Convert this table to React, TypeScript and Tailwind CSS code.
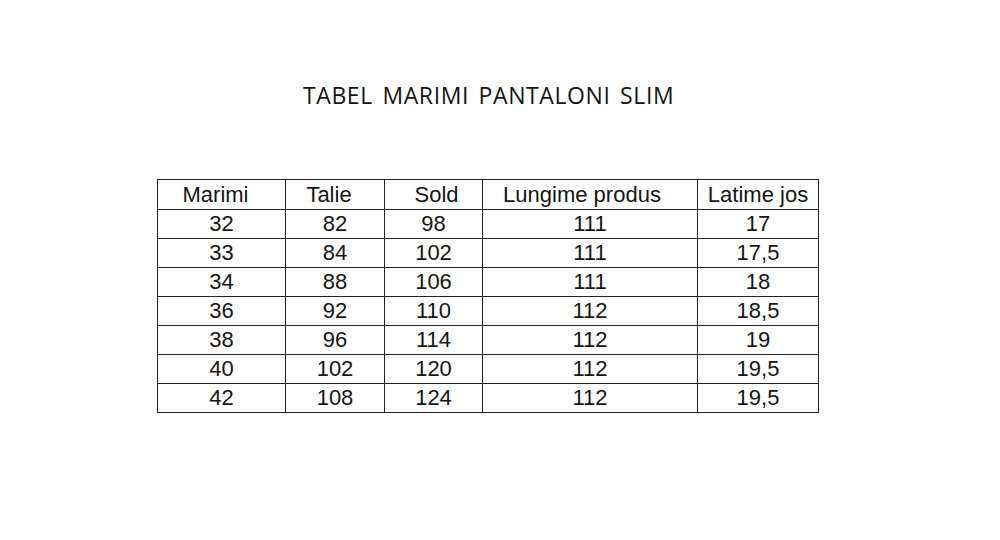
import React from "react";

const rows: string[][] = [
  ["32", "82", "98", "111", "17"],
  ["33", "84", "102", "111", "17,5"],
  ["34", "88", "106", "111", "18"],
  ["36", "92", "110", "112", "18,5"],
  ["38", "96", "114", "112", "19"],
  ["40", "102", "120", "112", "19,5"],
  ["42", "108", "124", "112", "19,5"],
];

const headers: { label: string; cls: string }[] = [
  { label: "Marimi", cls: "pr-[12px]" },
  { label: "Talie", cls: "pr-[12px]" },
  { label: "Sold", cls: "pl-[6px]" },
  { label: "Lungime produs", cls: "pr-[16px]" },
  { label: "Latime jos", cls: "" },
];

export default function App() {
  return (
    <div className="w-[1000px] h-[540px] bg-white text-[#151515]">
      <div className="pt-[80px] pl-[303px]">
        <h1 className="text-[23px] leading-[30px] font-normal font-['Open_Sans',sans-serif] tracking-[0.6px] [word-spacing:3px]">
          TABEL MARIMI PANTALONI SLIM
        </h1>
      </div>
      <div className="pt-[69px] pl-[157px]">
        <table className="table-fixed border-collapse font-['Liberation_Sans',Arial,sans-serif] text-[22px]">
          <colgroup>
            <col className="w-[128px]" />
            <col className="w-[99px]" />
            <col className="w-[98px]" />
            <col className="w-[215px]" />
            <col className="w-[121px]" />
          </colgroup>
          <thead>
            <tr className="h-[30px]">
              {headers.map((h) => (
                <th
                  key={h.label}
                  className={`border border-[#222] font-normal text-center p-0 leading-[24px] align-middle whitespace-nowrap ${h.cls}`}
                >
                  {h.label}
                </th>
              ))}
            </tr>
          </thead>
          <tbody>
            {rows.map((r, i) => (
              <tr key={i} className="h-[29px]">
                {r.map((c, j) => (
                  <td key={j} className="border border-[#222] text-center p-0 leading-[24px] align-middle">
                    {c}
                  </td>
                ))}
              </tr>
            ))}
          </tbody>
        </table>
      </div>
    </div>
  );
}
